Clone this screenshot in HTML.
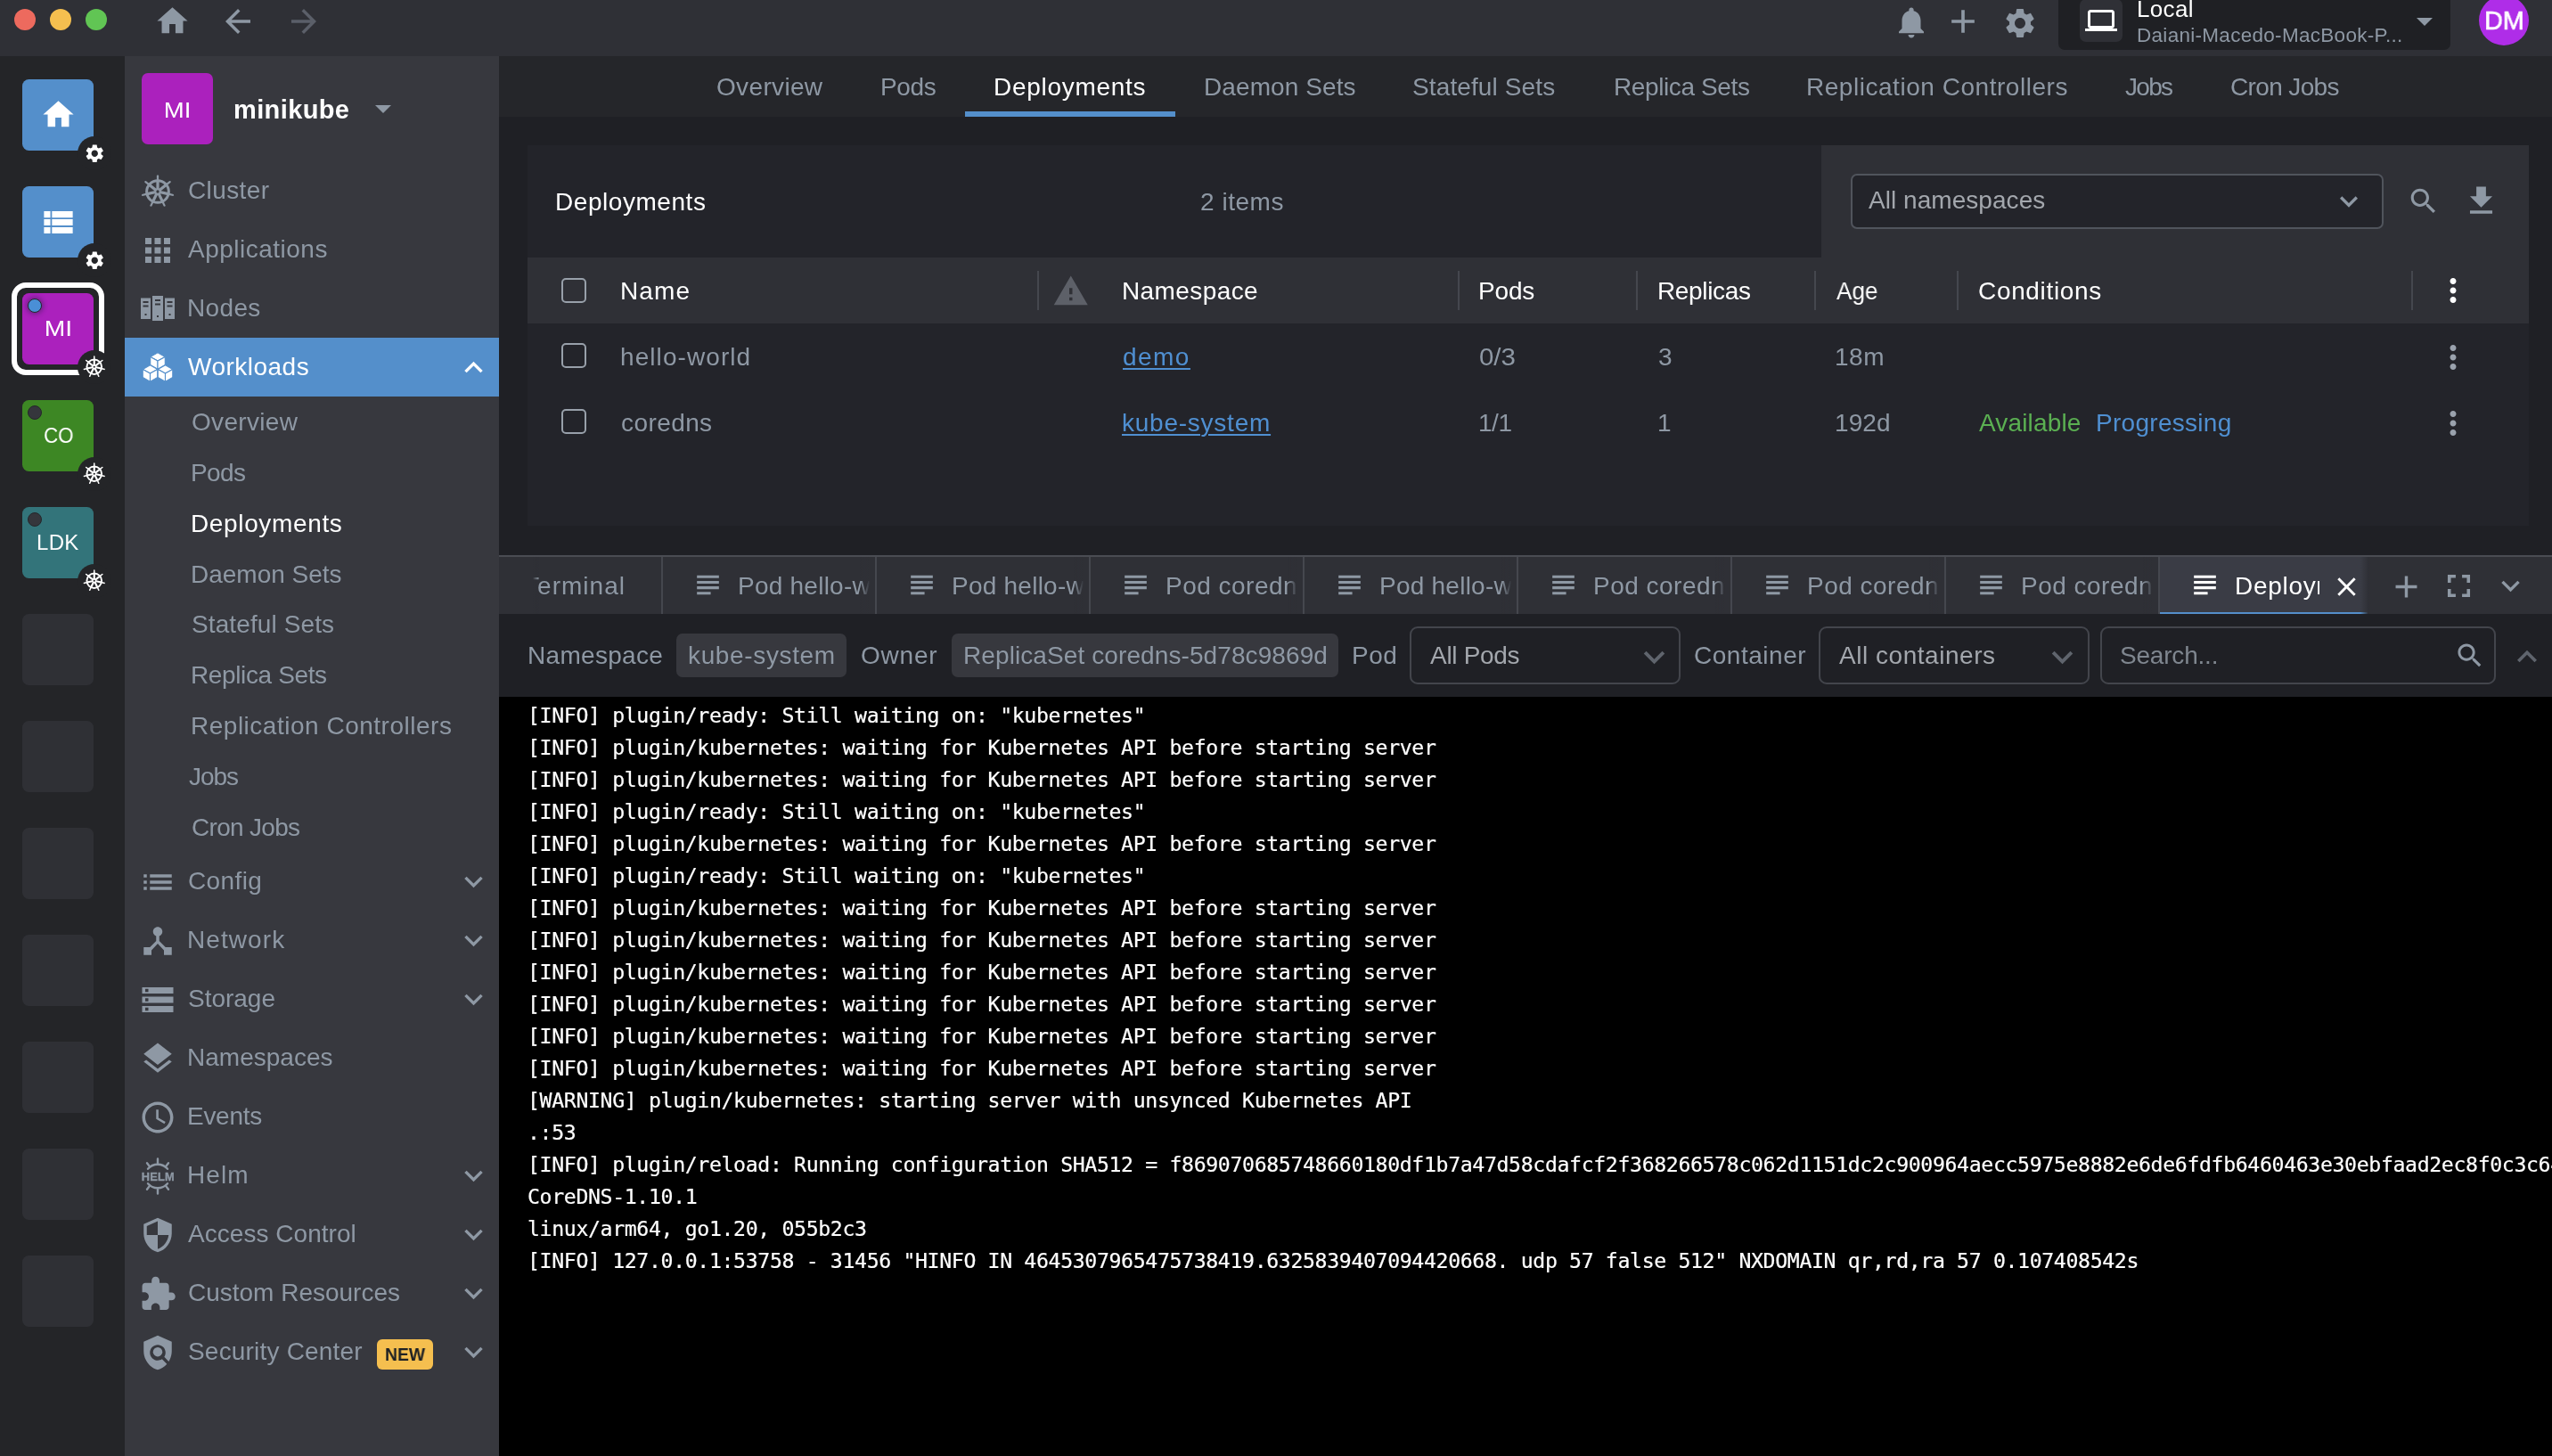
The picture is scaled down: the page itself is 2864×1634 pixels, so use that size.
<!DOCTYPE html>
<html lang="en"><head><meta charset="utf-8"><title>Lens - minikube - Deployments</title>
<style>
html,body{margin:0;padding:0;background:#1f2025;}
body{width:2864px;height:1634px;position:relative;overflow:hidden;font-family:"Liberation Sans", "DejaVu Sans", sans-serif;font-size:28px;color:#8e98a4;}
div,header,aside,nav,main,section,span.box,span.dot,span.t,svg.i{position:absolute;display:block;}
.i{display:block;overflow:visible;}
.dot{border-radius:50%;}
.t{white-space:nowrap;will-change:transform;}
.topbar,.hotbar,.sidebar,.main,.dock,.logs{overflow:hidden;}
.logs pre{will-change:transform;position:absolute;left:31.500px;top:2.500px;margin:0;font-family:"DejaVu Sans Mono", "Liberation Mono", monospace;font-size:23.200px;line-height:36px;color:#fff;white-space:pre;letter-spacing:-.366px;-webkit-text-stroke:.2px #fff;}
</style></head>
<body>
<header class="topbar" style="left:0;top:0;width:2864px;height:63px;background:#2f3036">
<span class="dot" style="left:16px;top:10px;width:24px;height:24px;background:#ed6a5e"></span>
<span class="dot" style="left:56px;top:10px;width:24px;height:24px;background:#f5bf4f"></span>
<span class="dot" style="left:96px;top:10px;width:24px;height:24px;background:#61c554"></span>
<svg class="i" style="left:172.5px;top:3px;width:41px;height:41px" viewBox="0 0 24 24" fill="#8e98a4"><path d="M10 20v-6h4v6h5v-8h3L12 3 2 12h3v8z"/></svg>
<svg class="i" style="left:246px;top:3px;width:42px;height:42px" viewBox="0 0 24 24" fill="#8e98a4"><path d="M20 11H7.83l5.59-5.59L12 4l-8 8 8 8 1.41-1.41L7.83 13H20v-2z"/></svg>
<svg class="i" style="left:320px;top:3px;width:42px;height:42px" viewBox="0 0 24 24" fill="#5b5f69"><path d="M12 4l-1.41 1.41L16.17 11H4v2h12.17l-5.58 5.59L12 20l8-8z"/></svg>
<svg class="i" style="left:2123.5px;top:3.5px;width:42px;height:42px" viewBox="0 0 24 24" fill="#8e98a4"><path d="M12 22c1.1 0 2-.9 2-2h-4c0 1.1.89 2 2 2zm6-6v-5c0-3.07-1.64-5.64-4.5-6.32V4c0-.83-.67-1.5-1.5-1.5s-1.5.67-1.5 1.5v.68C7.63 5.36 6 7.92 6 11v5l-2 2v1h16v-1l-2-2z"/></svg>
<svg class="i" style="left:2181px;top:2px;width:44px;height:44px" viewBox="0 0 24 24" fill="#8e98a4"><path d="M19 13h-6v6h-2v-6H5v-2h6V5h2v6h6v2z"/></svg>
<svg class="i" style="left:2247px;top:5.5px;width:40px;height:40px" viewBox="0 0 24 24" fill="#8e98a4"><path d="M19.14 12.94c.04-.3.06-.61.06-.94 0-.32-.02-.64-.07-.94l2.03-1.58c.18-.14.23-.41.12-.61l-1.92-3.32c-.12-.22-.37-.29-.59-.22l-2.39.96c-.5-.38-1.03-.7-1.62-.94l-.36-2.54c-.04-.24-.24-.41-.48-.41h-3.84c-.24 0-.43.17-.47.41l-.36 2.54c-.59.24-1.13.57-1.62.94l-2.39-.96c-.22-.08-.47 0-.59.22L2.74 8.87c-.12.21-.08.47.12.61l2.03 1.58c-.05.3-.09.63-.09.94s.02.64.07.94l-2.03 1.58c-.18.14-.23.41-.12.61l1.92 3.32c.12.22.37.29.59.22l2.39-.96c.5.38 1.03.7 1.62.94l.36 2.54c.05.24.24.41.48.41h3.84c.24 0 .44-.17.47-.41l.36-2.54c.59-.24 1.13-.56 1.62-.94l2.39.96c.22.08.47 0 .59-.22l1.92-3.32c.12-.22.07-.47-.12-.61l-2.01-1.58zM12 15.6c-1.98 0-3.6-1.62-3.6-3.6s1.62-3.6 3.6-3.6 3.6 1.62 3.6 3.6-1.62 3.6-3.6 3.6z"/></svg>
<div class="box" style="left:2310px;top:-12px;width:440px;height:68px;background:#1f2024;border-radius:7px">
<div class="box" style="left:24px;top:10.600px;width:48px;height:48px;background:#2f3036;border-radius:7px"></div>
<svg class="i" style="left:30px;top:16.8px;width:36px;height:36px" viewBox="0 0 24 24" fill="#fff"><path d="M20 18c1.1 0 1.99-.9 1.99-2L22 6c0-1.1-.9-2-2-2H4c-1.1 0-2 .9-2 2v10c0 1.1.9 2 2 2H0v2h24v-2h-4zM4 6h16v10H4V6z"/></svg>
<span class="t" style="left:88.00px;top:4.9px;font-size:26px;line-height:34px;color:#fff;letter-spacing:0.350px;">Local</span>
<span class="t" style="left:88.00px;top:36.5px;font-size:22.5px;line-height:29px;color:#8e98a4;letter-spacing:0.292px;">Daiani-Macedo-MacBook-P...</span>
<svg class="i" style="left:402px;top:31.600px;width:18px;height:9px" viewBox="0 0 18 9" fill="#8e98a4"><path d="M0 0h18L9 9z"/></svg>
</div>
<div class="dot" style="left:2782px;top:-5.500px;width:56px;height:56px;background:#af2de8"></div>
<span class="t" style="left:2787.50px;top:3.7px;font-size:29.5px;line-height:38px;color:#fff;transform:scaleX(0.9762);transform-origin:2.00px 50%;-webkit-text-stroke:.6px #fff;">DM</span>
</header>
<aside class="hotbar" style="left:0;top:63px;width:140px;height:1571px;background:#242528">
<div class="box" style="left:25px;top:26px;width:80px;height:80px;background:#548fcb;border-radius:7.500px"></div>
<svg class="i" style="left:44.5px;top:44.5px;width:41px;height:41px" viewBox="0 0 24 24" fill="#fff"><path d="M10 20v-6h4v6h5v-8h3L12 3 2 12h3v8z"/></svg>
<span class="dot" style="left:87px;top:90px;width:38px;height:38px;background:#242528"></span><svg class="i" style="left:93.75px;top:96.75px;width:24.5px;height:24.5px" viewBox="0 0 24 24" fill="#fff"><path d="M19.14 12.94c.04-.3.06-.61.06-.94 0-.32-.02-.64-.07-.94l2.03-1.58c.18-.14.23-.41.12-.61l-1.92-3.32c-.12-.22-.37-.29-.59-.22l-2.39.96c-.5-.38-1.03-.7-1.62-.94l-.36-2.54c-.04-.24-.24-.41-.48-.41h-3.84c-.24 0-.43.17-.47.41l-.36 2.54c-.59.24-1.13.57-1.62.94l-2.39-.96c-.22-.08-.47 0-.59.22L2.74 8.87c-.12.21-.08.47.12.61l2.03 1.58c-.05.3-.09.63-.09.94s.02.64.07.94l-2.03 1.58c-.18.14-.23.41-.12.61l1.92 3.32c.12.22.37.29.59.22l2.39-.96c.5.38 1.03.7 1.62.94l.36 2.54c.05.24.24.41.48.41h3.84c.24 0 .44-.17.47-.41l.36-2.54c.59-.24 1.13-.56 1.62-.94l2.39.96c.22.08.47 0 .59-.22l1.92-3.32c.12-.22.07-.47-.12-.61l-2.01-1.58zM12 15.6c-1.98 0-3.6-1.62-3.6-3.6s1.62-3.6 3.6-3.6 3.6 1.62 3.6 3.6-1.62 3.6-3.6 3.6z"/></svg>
<div class="box" style="left:25px;top:146px;width:80px;height:80px;background:#548fcb;border-radius:7.500px"></div>
<svg class="i" style="left:43.5px;top:164.5px;width:43px;height:43px" viewBox="0 0 24 24" fill="#fff"><path d="M3 14h4v-4H3v4zm0 5h4v-4H3v4zM3 9h4V5H3v4zm5 5h13v-4H8v4zm0 5h13v-4H8v4zM8 5v4h13V5H8z"/></svg>
<span class="dot" style="left:87px;top:210px;width:38px;height:38px;background:#242528"></span><svg class="i" style="left:93.75px;top:216.75px;width:24.5px;height:24.5px" viewBox="0 0 24 24" fill="#fff"><path d="M19.14 12.94c.04-.3.06-.61.06-.94 0-.32-.02-.64-.07-.94l2.03-1.58c.18-.14.23-.41.12-.61l-1.92-3.32c-.12-.22-.37-.29-.59-.22l-2.39.96c-.5-.38-1.03-.7-1.62-.94l-.36-2.54c-.04-.24-.24-.41-.48-.41h-3.84c-.24 0-.43.17-.47.41l-.36 2.54c-.59.24-1.13.57-1.62.94l-2.39-.96c-.22-.08-.47 0-.59.22L2.74 8.87c-.12.21-.08.47.12.61l2.03 1.58c-.05.3-.09.63-.09.94s.02.64.07.94l-2.03 1.58c-.18.14-.23.41-.12.61l1.92 3.32c.12.22.37.29.59.22l2.39-.96c.5.38 1.03.7 1.62.94l.36 2.54c.05.24.24.41.48.41h3.84c.24 0 .44-.17.47-.41l.36-2.54c.59-.24 1.13-.56 1.62-.94l2.39.96c.22.08.47 0 .59-.22l1.92-3.32c.12-.22.07-.47-.12-.61l-2.01-1.58zM12 15.6c-1.98 0-3.6-1.62-3.6-3.6s1.62-3.6 3.6-3.6 3.6 1.62 3.6 3.6-1.62 3.6-3.6 3.6z"/></svg>
<div class="box" style="left:13px;top:254px;width:104px;height:104px;border:6.500px solid #fff;border-radius:16px;box-sizing:border-box"></div>
<div class="box" style="left:25px;top:266px;width:80px;height:80px;background:#ab21bd;border-radius:7.500px"></div>
<span class="dot" style="left:30.800px;top:272px;width:16.200px;height:16.200px;background:#4a8fd6;border:1.500px solid #25262a;box-sizing:border-box;box-shadow:0 0 5px 2px rgba(30,30,60,.4);"></span>
<span class="t" style="left:49.90px;top:290.3px;font-size:24px;line-height:31px;color:#fff;transform:scaleX(1.1783);transform-origin:2.00px 50%;">MI</span>
<span class="dot" style="left:87px;top:330px;width:38px;height:38px;background:#242528"></span><svg class="i" style="left:93.25px;top:336.25px;width:25.5px;height:25.5px" viewBox="0 0 24 24" fill="#fff"><circle cx="12" cy="12" r="7.800" fill="none" stroke="#fff" stroke-width="1.900"/><path d="M10.98 12.00L10.98 4.40L11.29 3.60L11.29 0.70L12.00 0.20L12.71 0.70L12.71 3.60L13.02 4.40L13.02 12.00zM11.36 11.20L17.31 6.46L18.13 6.21L20.40 4.40L21.23 4.64L21.27 5.51L19.01 7.31L18.58 8.06L12.64 12.80zM12.23 11.01L19.64 12.70L20.35 13.18L23.17 13.83L23.50 14.63L22.86 15.20L20.03 14.56L19.18 14.69L11.77 12.99zM12.92 11.56L16.22 18.40L16.28 19.26L17.54 21.88L17.12 22.63L16.27 22.49L15.01 19.87L14.38 19.29L11.08 12.44zM12.92 12.44L9.62 19.29L8.99 19.87L7.73 22.49L6.88 22.63L6.46 21.88L7.72 19.26L7.78 18.40L11.08 11.56zM12.23 12.99L4.82 14.69L3.97 14.56L1.14 15.20L0.50 14.63L0.83 13.83L3.65 13.18L4.36 12.70L11.77 11.01zM11.36 12.80L5.42 8.06L4.99 7.31L2.73 5.51L2.77 4.64L3.60 4.40L5.87 6.21L6.69 6.46L12.64 11.20z"/><circle cx="12" cy="12" r="1.050" fill="#242528"/></svg>
<div class="box" style="left:25px;top:386px;width:80px;height:80px;background:#3d8724;border-radius:7.500px"></div>
<span class="dot" style="left:30.800px;top:392px;width:16.200px;height:16.200px;background:#35363c;border:1.500px solid #25262a;box-sizing:border-box;"></span>
<span class="t" style="left:48.65px;top:410.3px;font-size:24px;line-height:31px;color:#fff;transform:scaleX(0.9294);transform-origin:1.00px 50%;">CO</span>
<span class="dot" style="left:87px;top:450px;width:38px;height:38px;background:#242528"></span><svg class="i" style="left:93.25px;top:456.25px;width:25.5px;height:25.5px" viewBox="0 0 24 24" fill="#fff"><circle cx="12" cy="12" r="7.800" fill="none" stroke="#fff" stroke-width="1.900"/><path d="M10.98 12.00L10.98 4.40L11.29 3.60L11.29 0.70L12.00 0.20L12.71 0.70L12.71 3.60L13.02 4.40L13.02 12.00zM11.36 11.20L17.31 6.46L18.13 6.21L20.40 4.40L21.23 4.64L21.27 5.51L19.01 7.31L18.58 8.06L12.64 12.80zM12.23 11.01L19.64 12.70L20.35 13.18L23.17 13.83L23.50 14.63L22.86 15.20L20.03 14.56L19.18 14.69L11.77 12.99zM12.92 11.56L16.22 18.40L16.28 19.26L17.54 21.88L17.12 22.63L16.27 22.49L15.01 19.87L14.38 19.29L11.08 12.44zM12.92 12.44L9.62 19.29L8.99 19.87L7.73 22.49L6.88 22.63L6.46 21.88L7.72 19.26L7.78 18.40L11.08 11.56zM12.23 12.99L4.82 14.69L3.97 14.56L1.14 15.20L0.50 14.63L0.83 13.83L3.65 13.18L4.36 12.70L11.77 11.01zM11.36 12.80L5.42 8.06L4.99 7.31L2.73 5.51L2.77 4.64L3.60 4.40L5.87 6.21L6.69 6.46L12.64 11.20z"/><circle cx="12" cy="12" r="1.050" fill="#242528"/></svg>
<div class="box" style="left:25px;top:506px;width:80px;height:80px;background:#33747a;border-radius:7.500px"></div>
<span class="dot" style="left:30.800px;top:512px;width:16.200px;height:16.200px;background:#35363c;border:1.500px solid #25262a;box-sizing:border-box;"></span>
<span class="t" style="left:41.15px;top:530.3px;font-size:24px;line-height:31px;color:#fff;letter-spacing:0.300px;">LDK</span>
<span class="dot" style="left:87px;top:570px;width:38px;height:38px;background:#242528"></span><svg class="i" style="left:93.25px;top:576.25px;width:25.5px;height:25.5px" viewBox="0 0 24 24" fill="#fff"><circle cx="12" cy="12" r="7.800" fill="none" stroke="#fff" stroke-width="1.900"/><path d="M10.98 12.00L10.98 4.40L11.29 3.60L11.29 0.70L12.00 0.20L12.71 0.70L12.71 3.60L13.02 4.40L13.02 12.00zM11.36 11.20L17.31 6.46L18.13 6.21L20.40 4.40L21.23 4.64L21.27 5.51L19.01 7.31L18.58 8.06L12.64 12.80zM12.23 11.01L19.64 12.70L20.35 13.18L23.17 13.83L23.50 14.63L22.86 15.20L20.03 14.56L19.18 14.69L11.77 12.99zM12.92 11.56L16.22 18.40L16.28 19.26L17.54 21.88L17.12 22.63L16.27 22.49L15.01 19.87L14.38 19.29L11.08 12.44zM12.92 12.44L9.62 19.29L8.99 19.87L7.73 22.49L6.88 22.63L6.46 21.88L7.72 19.26L7.78 18.40L11.08 11.56zM12.23 12.99L4.82 14.69L3.97 14.56L1.14 15.20L0.50 14.63L0.83 13.83L3.65 13.18L4.36 12.70L11.77 11.01zM11.36 12.80L5.42 8.06L4.99 7.31L2.73 5.51L2.77 4.64L3.60 4.40L5.87 6.21L6.69 6.46L12.64 11.20z"/><circle cx="12" cy="12" r="1.050" fill="#242528"/></svg>
<div class="box" style="left:25px;top:626px;width:80px;height:80px;background:#2f3035;border-radius:7.500px"></div>
<div class="box" style="left:25px;top:746px;width:80px;height:80px;background:#2f3035;border-radius:7.500px"></div>
<div class="box" style="left:25px;top:866px;width:80px;height:80px;background:#2f3035;border-radius:7.500px"></div>
<div class="box" style="left:25px;top:986px;width:80px;height:80px;background:#2f3035;border-radius:7.500px"></div>
<div class="box" style="left:25px;top:1106px;width:80px;height:80px;background:#2f3035;border-radius:7.500px"></div>
<div class="box" style="left:25px;top:1226px;width:80px;height:80px;background:#2f3035;border-radius:7.500px"></div>
<div class="box" style="left:25px;top:1346px;width:80px;height:80px;background:#2f3035;border-radius:7.500px"></div>
</aside>
<nav class="sidebar" style="left:140px;top:63px;width:420px;height:1571px;background:#37383e">
<div class="box" style="left:19px;top:19px;width:80px;height:80px;background:#ab21bd;border-radius:7px"></div>
<span class="t" style="left:44.10px;top:44.8px;font-size:24px;line-height:31px;color:#fff;transform:scaleX(1.1478);transform-origin:2.00px 50%;">MI</span>
<span class="t" style="left:122.30px;top:40.8px;font-size:29px;line-height:38px;color:#fff;font-weight:700;letter-spacing:0.386px;">minikube</span>
<svg class="i" style="left:280.5px;top:55px;width:18px;height:9px" viewBox="0 0 18 9" fill="#8e98a4"><path d="M0 0h18L9 9z"/></svg>
<svg class="i" style="left:18px;top:132.8px;width:38px;height:38px" viewBox="0 0 24 24" fill="#8e98a4"><circle cx="12" cy="12" r="7.800" fill="none" stroke="#8e98a4" stroke-width="1.900"/><path d="M10.98 12.00L10.98 4.40L11.29 3.60L11.29 0.70L12.00 0.20L12.71 0.70L12.71 3.60L13.02 4.40L13.02 12.00zM11.36 11.20L17.31 6.46L18.13 6.21L20.40 4.40L21.23 4.64L21.27 5.51L19.01 7.31L18.58 8.06L12.64 12.80zM12.23 11.01L19.64 12.70L20.35 13.18L23.17 13.83L23.50 14.63L22.86 15.20L20.03 14.56L19.18 14.69L11.77 12.99zM12.92 11.56L16.22 18.40L16.28 19.26L17.54 21.88L17.12 22.63L16.27 22.49L15.01 19.87L14.38 19.29L11.08 12.44zM12.92 12.44L9.62 19.29L8.99 19.87L7.73 22.49L6.88 22.63L6.46 21.88L7.72 19.26L7.78 18.40L11.08 11.56zM12.23 12.99L4.82 14.69L3.97 14.56L1.14 15.20L0.50 14.63L0.83 13.83L3.65 13.18L4.36 12.70L11.77 11.01zM11.36 12.80L5.42 8.06L4.99 7.31L2.73 5.51L2.77 4.64L3.60 4.40L5.87 6.21L6.69 6.46L12.64 11.20z"/><circle cx="12" cy="12" r="1.050" fill="#37383e"/></svg><span class="t" style="left:70.50px;top:133px;font-size:28px;line-height:36px;color:#8e98a4;letter-spacing:0.400px;">Cluster</span>
<svg class="i" style="left:16px;top:196.5px;width:42px;height:42px" viewBox="0 0 24 24" fill="#8e98a4"><path d="M4 8h4V4H4v4zm6 12h4v-4h-4v4zm-6 0h4v-4H4v4zm0-6h4v-4H4v4zm6 0h4v-4h-4v4zm6-10v4h4V4h-4zm-6 4h4V4h-4v4zm6 6h4v-4h-4v4zm0 6h4v-4h-4v4z"/></svg><span class="t" style="left:70.70px;top:199px;font-size:28px;line-height:36px;color:#8e98a4;letter-spacing:0.491px;">Applications</span>
<svg class="i" style="left:18px;top:269px;width:38px;height:28px" viewBox="0 0 38 28"><g fill="#8e98a4"><rect x="0" y="2.5" width="11" height="23.5"/><rect x="13" y="0" width="12" height="28"/><rect x="27" y="2.5" width="11" height="23.5"/></g><g fill="#37383e"><rect x="2.5" y="6" width="6" height="2"/><rect x="2.5" y="10.5" width="6" height="2"/><rect x="4.5" y="20" width="2" height="2"/><rect x="16" y="4" width="6" height="2"/><rect x="16" y="8.5" width="6" height="2"/><rect x="18" y="22" width="2" height="2"/><rect x="29.500" y="6" width="6" height="2"/><rect x="29.500" y="10.500" width="6" height="2"/><rect x="31.500" y="20" width="2" height="2"/></g></svg><span class="t" style="left:70.10px;top:265px;font-size:28px;line-height:36px;color:#8e98a4;letter-spacing:0.350px;">Nodes</span>
<div class="box" style="left:0;top:316px;width:420px;height:66px;background:#548fcb"></div><svg class="i" style="left:19px;top:331px;width:36px;height:36px" viewBox="0 0 36 36" fill="#fff" stroke="#548fcb" stroke-width="1.1" stroke-linejoin="round"><polygon points="18,1.8699999999999992 26.3,6.435 18,11 9.7,6.435"/><polygon points="9.7,6.435 18,11 18,20.130000000000003 9.7,15.565000000000001"/><polygon points="26.3,6.435 18,11 18,20.130000000000003 26.3,15.565000000000001"/><polygon points="9.5,15.87 17.8,20.435 9.5,25 1.1999999999999993,20.435"/><polygon points="1.1999999999999993,20.435 9.5,25 9.5,34.13 1.1999999999999993,29.565"/><polygon points="17.8,20.435 9.5,25 9.5,34.13 17.8,29.565"/><polygon points="26.5,15.87 34.8,20.435 26.5,25 18.2,20.435"/><polygon points="18.2,20.435 26.5,25 26.5,34.13 18.2,29.565"/><polygon points="34.8,20.435 26.5,25 26.5,34.13 34.8,29.565"/></svg><span class="t" style="left:70.70px;top:331px;font-size:28px;line-height:36px;color:#fff;letter-spacing:0.488px;">Workloads</span><svg class="i" style="left:370.5px;top:329px;width:41px;height:41px" viewBox="0 0 24 24" fill="#fff"><path d="M7.41 15.41L12 10.83l4.59 4.58L18 14l-6-6-6 6z"/></svg>
<span class="t" style="left:74.50px;top:393.2px;font-size:28px;line-height:36px;color:#8e98a4;letter-spacing:0.329px;">Overview</span>
<span class="t" style="left:74.40px;top:450px;font-size:28px;line-height:36px;color:#8e98a4;letter-spacing:-0.633px;">Pods</span>
<span class="t" style="left:74.40px;top:506.8px;font-size:28px;line-height:36px;color:#fff;letter-spacing:0.640px;">Deployments</span>
<span class="t" style="left:74.40px;top:563.6px;font-size:28px;line-height:36px;color:#8e98a4;letter-spacing:-0.010px;">Daemon Sets</span>
<span class="t" style="left:74.50px;top:620.4px;font-size:28px;line-height:36px;color:#8e98a4;letter-spacing:0.108px;">Stateful Sets</span>
<span class="t" style="left:74.40px;top:677.2px;font-size:28px;line-height:36px;color:#8e98a4;letter-spacing:-0.373px;">Replica Sets</span>
<span class="t" style="left:74.40px;top:734px;font-size:28px;line-height:36px;color:#8e98a4;letter-spacing:0.509px;">Replication Controllers</span>
<span class="t" style="left:71.70px;top:790.8px;font-size:28px;line-height:36px;color:#8e98a4;letter-spacing:-1.033px;">Jobs</span>
<span class="t" style="left:74.50px;top:847.6px;font-size:28px;line-height:36px;color:#8e98a4;letter-spacing:-0.688px;">Cron Jobs</span>
<svg class="i" style="left:16px;top:905.7px;width:42px;height:42px" viewBox="0 0 24 24" fill="#8e98a4"><path d="M3 13h2v-2H3v2zm0 4h2v-2H3v2zm0-8h2V7H3v2zm4 4h14v-2H7v2zm0 4h14v-2H7v2zM7 7v2h14V7H7z"/></svg><span class="t" style="left:70.50px;top:908.4px;font-size:28px;line-height:36px;color:#8e98a4;letter-spacing:0.380px;">Config</span><svg class="i" style="left:370.5px;top:906.4px;width:41px;height:41px" viewBox="0 0 24 24" fill="#8e98a4"><path d="M7.41 8.59L12 13.17l4.59-4.58L18 10l-6 6-6-6 1.41-1.41z"/></svg>
<svg class="i" style="left:16px;top:972.4px;width:42px;height:42px" viewBox="0 0 24 24" fill="#8e98a4"><path d="M17 16l-4-4V8.82C14.16 8.4 15 7.3 15 6c0-1.66-1.34-3-3-3S9 4.34 9 6c0 1.3.84 2.4 2 2.82V12l-4 4H3v5h5v-3.05l4-4.2 4 4.2V21h5v-5h-4z"/></svg><span class="t" style="left:70.10px;top:974.4px;font-size:28px;line-height:36px;color:#8e98a4;letter-spacing:1.083px;">Network</span><svg class="i" style="left:370.5px;top:972.4px;width:41px;height:41px" viewBox="0 0 24 24" fill="#8e98a4"><path d="M7.41 8.59L12 13.17l4.59-4.58L18 10l-6 6-6-6 1.41-1.41z"/></svg>
<svg class="i" style="left:16px;top:1038.4px;width:42px;height:42px" viewBox="0 0 24 24" fill="#8e98a4"><path d="M2 20h20v-4H2v4zm2-3h2v2H4v-2zM2 4v4h20V4H2zm4 3H4V5h2v2zm-4 7h20v-4H2v4zm2-3h2v2H4v-2z"/></svg><span class="t" style="left:70.50px;top:1040.4px;font-size:28px;line-height:36px;color:#8e98a4;letter-spacing:-0.017px;">Storage</span><svg class="i" style="left:370.5px;top:1038.4px;width:41px;height:41px" viewBox="0 0 24 24" fill="#8e98a4"><path d="M7.41 8.59L12 13.17l4.59-4.58L18 10l-6 6-6-6 1.41-1.41z"/></svg>
<svg class="i" style="left:16px;top:1103.9px;width:42px;height:42px" viewBox="0 0 24 24" fill="#8e98a4"><path d="M11.99 18.54l-7.37-5.73L3 14.07l9 7 9-7-1.63-1.27-7.38 5.74zM12 16l7.36-5.73L21 9l-9-7-9 7 1.63 1.27L12 16z"/></svg><span class="t" style="left:70.10px;top:1106.4px;font-size:28px;line-height:36px;color:#8e98a4;letter-spacing:0.011px;">Namespaces</span>
<svg class="i" style="left:16px;top:1169.9px;width:42px;height:42px" viewBox="0 0 24 24" fill="#8e98a4"><path d="M11.99 2C6.47 2 2 6.48 2 12s4.47 10 9.99 10C17.52 22 22 17.52 22 12S17.52 2 11.99 2zM12 20c-4.42 0-8-3.58-8-8s3.58-8 8-8 8 3.58 8 8-3.58 8-8 8zm.5-13H11v6l5.25 3.15.75-1.23-4.5-2.67z"/></svg><span class="t" style="left:70.10px;top:1172.4px;font-size:28px;line-height:36px;color:#8e98a4;letter-spacing:-0.280px;">Events</span>
<svg class="i" style="left:18px;top:1236.4px;width:38px;height:42px;will-change:transform" viewBox="0 0 38 42" fill="none" stroke="#8e98a4" stroke-width="2.400" stroke-linecap="round"><path d="M8 12.800A14.500 14.500 0 0 1 30 12.800"/><path d="M8 29.200A14.500 14.500 0 0 0 30 29.200"/><path d="M19 7.300V1.400M10.300 10.600L7 6.200M27.700 10.600l3.300-4.400M19 34.700V40.600M10.300 31.400l-3.300 4.400M27.700 31.400l3.300 4.400"/><text x="19.300" y="25.800" text-anchor="middle" style="font-family:'Liberation Sans',sans-serif;font-weight:700;font-size:12.800px;letter-spacing:.2px" fill="#8e98a4" stroke="#8e98a4" stroke-width=".35">HELM</text></svg><span class="t" style="left:70.10px;top:1238.4px;font-size:28px;line-height:36px;color:#8e98a4;letter-spacing:1.067px;">Helm</span><svg class="i" style="left:370.5px;top:1236.4px;width:41px;height:41px" viewBox="0 0 24 24" fill="#8e98a4"><path d="M7.41 8.59L12 13.17l4.59-4.58L18 10l-6 6-6-6 1.41-1.41z"/></svg>
<svg class="i" style="left:16px;top:1301.9px;width:42px;height:42px" viewBox="0 0 24 24" fill="#8e98a4"><path d="M12 1L3 5v6c0 5.55 3.84 10.74 9 12 5.16-1.26 9-6.45 9-12V5l-9-4zm0 10.99h7c-.53 4.12-3.28 7.79-7 8.940V12H5V6.3l7-3.11v8.8z"/></svg><span class="t" style="left:70.70px;top:1304.4px;font-size:28px;line-height:36px;color:#8e98a4;letter-spacing:0.038px;">Access Control</span><svg class="i" style="left:370.5px;top:1302.4px;width:41px;height:41px" viewBox="0 0 24 24" fill="#8e98a4"><path d="M7.41 8.59L12 13.17l4.59-4.58L18 10l-6 6-6-6 1.41-1.41z"/></svg>
<svg class="i" style="left:15.75px;top:1367.65px;width:42.5px;height:42.5px" viewBox="0 0 24 24" fill="#8e98a4"><path d="M20.5 11H19V7c0-1.1-.9-2-2-2h-4V3.5C13 2.12 11.88 1 10.5 1S8 2.12 8 3.5V5H4c-1.1 0-1.99.9-1.99 2v3.8H3.500c1.490 0 2.700 1.210 2.700 2.700s-1.210 2.700-2.700 2.700H2V20c0 1.100.900 2 2 2h3.800v-1.500c0-1.490 1.210-2.700 2.700-2.700 1.490 0 2.700 1.210 2.700 2.700V22H17c1.100 0 2-.900 2-2v-4h1.500c1.380 0 2.500-1.120 2.500-2.500S21.880 11 20.500 11z"/></svg><span class="t" style="left:70.50px;top:1370.4px;font-size:28px;line-height:36px;color:#8e98a4;letter-spacing:-0.007px;">Custom Resources</span><svg class="i" style="left:370.5px;top:1368.4px;width:41px;height:41px" viewBox="0 0 24 24" fill="#8e98a4"><path d="M7.41 8.59L12 13.17l4.59-4.58L18 10l-6 6-6-6 1.41-1.41z"/></svg>
<svg class="i" style="left:16px;top:1433.9px;width:42px;height:42px" viewBox="0 0 24 24" fill="#8e98a4"><circle cx="12" cy="11.500" r="3"/><path d="M21 5l-9-4-9 4v6c0 5.55 3.84 10.74 9 12 2.3-.56 4.33-1.9 5.88-3.71l-3.12-3.12c-1.940 1.290-4.580 1.070-6.290-.640-1.950-1.950-1.950-5.120 0-7.070 1.950-1.950 5.120-1.950 7.070 0 1.710 1.710 1.920 4.350.640 6.290l2.900 2.900C20.290 15.690 21 13.380 21 11V5z"/></svg><span class="t" style="left:70.50px;top:1436.4px;font-size:28px;line-height:36px;color:#8e98a4;letter-spacing:0.193px;">Security Center</span><svg class="i" style="left:370.5px;top:1434.4px;width:41px;height:41px" viewBox="0 0 24 24" fill="#8e98a4"><path d="M7.41 8.59L12 13.17l4.59-4.58L18 10l-6 6-6-6 1.41-1.41z"/></svg>
<div class="box" style="left:283px;top:1440px;width:63px;height:34px;background:#f5bf4f;border-radius:6px"></div>
<span class="t" style="left:292.00px;top:1444px;font-size:20px;line-height:26px;color:#1e2124;font-weight:700;transform:scaleX(0.9652);transform-origin:1.00px 50%;">NEW</span>
</nav>
<main class="main" style="left:560px;top:63px;width:2304px;height:560px;background:#1f2025">
<div class="box" style="left:0;top:0;width:2304px;height:68px;background:#25262a"></div>
<span class="t" style="left:243.90px;top:17px;font-size:28px;line-height:36px;color:#8e98a4;letter-spacing:0.343px;">Overview</span>
<span class="t" style="left:427.70px;top:17px;font-size:28px;line-height:36px;color:#8e98a4;letter-spacing:-0.367px;">Pods</span>
<span class="t" style="left:554.70px;top:17px;font-size:28px;line-height:36px;color:#fff;letter-spacing:0.720px;">Deployments</span>
<span class="t" style="left:790.50px;top:17px;font-size:28px;line-height:36px;color:#8e98a4;letter-spacing:0.090px;">Daemon Sets</span>
<span class="t" style="left:1024.50px;top:17px;font-size:28px;line-height:36px;color:#8e98a4;letter-spacing:0.117px;">Stateful Sets</span>
<span class="t" style="left:1250.50px;top:17px;font-size:28px;line-height:36px;color:#8e98a4;letter-spacing:-0.391px;">Replica Sets</span>
<span class="t" style="left:1466.60px;top:17px;font-size:28px;line-height:36px;color:#8e98a4;letter-spacing:0.532px;">Replication Controllers</span>
<span class="t" style="left:1825.00px;top:17px;font-size:28px;line-height:36px;color:#8e98a4;letter-spacing:-1.700px;">Jobs</span>
<span class="t" style="left:1943.20px;top:17px;font-size:28px;line-height:36px;color:#8e98a4;letter-spacing:-0.637px;">Cron Jobs</span>
<div class="box" style="left:523px;top:61.5px;width:236px;height:6.500px;background:#548fcb"></div>
<div class="box" style="left:32px;top:100px;width:2246px;height:427px;background:#23242a"></div>
<div class="box" style="left:1484px;top:100px;width:794px;height:126px;background:#2f3036"></div>
<span class="t" style="left:62.80px;top:146px;font-size:28px;line-height:36px;color:#fff;letter-spacing:0.550px;">Deployments</span>
<span class="t" style="left:787.20px;top:146px;font-size:28px;line-height:36px;color:#8e98a4;letter-spacing:0.533px;">2 items</span>
<div class="box" style="left:1517px;top:132px;width:598px;height:62px;background:#23242a;border:2px solid #50545c;border-radius:7px;box-sizing:border-box"></div>
<span class="t" style="left:1537.00px;top:144px;font-size:28px;line-height:36px;color:#a3a7ad;letter-spacing:0.046px;">All namespaces</span>
<svg class="i" style="left:2056.4px;top:143px;width:40px;height:40px" viewBox="0 0 24 24" fill="#8e98a4"><path d="M7.41 8.59L12 13.17l4.59-4.58L18 10l-6 6-6-6 1.41-1.41z"/></svg>
<svg class="i" style="left:2140.95px;top:144.25px;width:37.5px;height:37.5px" viewBox="0 0 24 24" fill="#8e98a4"><path d="M15.5 14h-.79l-.28-.27C15.41 12.59 16 11.11 16 9.5 16 5.91 13.09 3 9.5 3S3 5.91 3 9.5 5.91 16 9.5 16c1.61 0 3.09-.59 4.23-1.57l.27.28v.79l5 4.99L20.49 19l-4.99-5zm-6 0C7.01 14 5 11.99 5 9.5S7.01 5 9.5 5 14 7.01 14 9.5 11.99 14 9.5 14z"/></svg>
<svg class="i" style="left:2203px;top:141px;width:43px;height:43px" viewBox="0 0 24 24" fill="#8e98a4"><path d="M19 9h-4V3H9v6H5l7 7 7-7zM5 18v2h14v-2H5z"/></svg>
<div class="box" style="left:32px;top:226px;width:2246px;height:74px;background:#2f3036"></div>
<span class="box" style="left:70px;top:249px;width:28px;height:28px;border:2px solid #98a0aa;border-radius:5px;box-sizing:border-box"></span>
<span class="t" style="left:135.60px;top:246px;font-size:28px;line-height:36px;color:#fff;letter-spacing:1.133px;">Name</span>
<span class="t" style="left:698.50px;top:246px;font-size:28px;line-height:36px;color:#fff;letter-spacing:0.400px;">Namespace</span>
<span class="t" style="left:1099.20px;top:246px;font-size:28px;line-height:36px;color:#fff;letter-spacing:-0.167px;">Pods</span>
<span class="t" style="left:1299.50px;top:246px;font-size:28px;line-height:36px;color:#fff;letter-spacing:-0.357px;">Replicas</span>
<span class="t" style="left:1500.60px;top:246px;font-size:28px;line-height:36px;color:#fff;transform:scaleX(0.9306);transform-origin:0.00px 50%;">Age</span>
<span class="t" style="left:1660.20px;top:246px;font-size:28px;line-height:36px;color:#fff;letter-spacing:0.667px;">Conditions</span>
<span class="box" style="left:604px;top:241px;width:2px;height:44px;background:#45474e"></span>
<span class="box" style="left:1076px;top:241px;width:2px;height:44px;background:#45474e"></span>
<span class="box" style="left:1276px;top:241px;width:2px;height:44px;background:#45474e"></span>
<span class="box" style="left:1476px;top:241px;width:2px;height:44px;background:#45474e"></span>
<span class="box" style="left:1636px;top:241px;width:2px;height:44px;background:#45474e"></span>
<span class="box" style="left:2146px;top:241px;width:2px;height:44px;background:#45474e"></span>
<svg class="i" style="left:620.55px;top:242.95px;width:41.5px;height:41.5px" viewBox="0 0 24 24" fill="#5d6068"><path d="M1 21h22L12 2 1 21zm12-3h-2v-2h2v2zm0-4h-2v-4h2v4z"/></svg>
<svg class="i" style="left:2171.5px;top:242px;width:42px;height:42px" viewBox="0 0 24 24" fill="#fff"><path d="M12 8c1.1 0 2-.9 2-2s-.9-2-2-2-2 .9-2 2 .9 2 2 2zm0 2c-1.1 0-2 .9-2 2s.9 2 2 2 2-.9 2-2-.9-2-2-2zm0 6c-1.1 0-2 .9-2 2s.9 2 2 2 2-.9 2-2-.9-2-2-2z"/></svg>
<span class="box" style="left:70px;top:322.3px;width:28px;height:28px;border:2px solid #98a0aa;border-radius:5px;box-sizing:border-box"></span>
<span class="t" style="left:135.60px;top:319.5px;font-size:28px;line-height:36px;color:#8e98a4;letter-spacing:1.080px;">hello-world</span>
<span class="t" style="left:699.50px;top:319.5px;font-size:28px;line-height:36px;color:#4f8fd1;letter-spacing:1.467px;text-decoration:underline;text-decoration-thickness:1.5px;text-underline-offset:2.5px;">demo</span>
<span class="t" style="left:1100.20px;top:319.5px;font-size:28px;line-height:36px;color:#8e98a4;transform:scaleX(1.0514);transform-origin:1.00px 50%;">0/3</span>
<span class="t" style="left:1300.50px;top:319.5px;font-size:28px;line-height:36px;color:#8e98a4;">3</span>
<span class="t" style="left:1499.20px;top:319.5px;font-size:28px;line-height:36px;color:#8e98a4;letter-spacing:0.500px;">18m</span>
<svg class="i" style="left:2171.5px;top:317px;width:42px;height:42px" viewBox="0 0 24 24" fill="#9aa2ad"><path d="M12 8c1.1 0 2-.9 2-2s-.9-2-2-2-2 .9-2 2 .9 2 2 2zm0 2c-1.1 0-2 .9-2 2s.9 2 2 2 2-.9 2-2-.9-2-2-2zm0 6c-1.1 0-2 .9-2 2s.9 2 2 2 2-.9 2-2-.9-2-2-2z"/></svg>
<span class="box" style="left:70px;top:396.3px;width:28px;height:28px;border:2px solid #98a0aa;border-radius:5px;box-sizing:border-box"></span>
<span class="t" style="left:136.60px;top:393.5px;font-size:28px;line-height:36px;color:#8e98a4;letter-spacing:0.417px;">coredns</span>
<span class="t" style="left:698.50px;top:393.5px;font-size:28px;line-height:36px;color:#4f8fd1;letter-spacing:0.760px;text-decoration:underline;text-decoration-thickness:1.5px;text-underline-offset:2.5px;">kube-system</span>
<span class="t" style="left:1099.20px;top:393.5px;font-size:28px;line-height:36px;color:#8e98a4;letter-spacing:-0.450px;">1/1</span>
<span class="t" style="left:1299.50px;top:393.5px;font-size:28px;line-height:36px;color:#8e98a4;">1</span>
<span class="t" style="left:1499.20px;top:393.5px;font-size:28px;line-height:36px;color:#8e98a4;letter-spacing:0.067px;">192d</span>
<span class="t" style="left:1661.20px;top:393.5px;font-size:28px;line-height:36px;color:#5bb052;letter-spacing:0.163px;">Available</span>
<span class="t" style="left:1792.30px;top:393.5px;font-size:28px;line-height:36px;color:#4f8fd1;letter-spacing:0.290px;">Progressing</span>
<svg class="i" style="left:2171.5px;top:391px;width:42px;height:42px" viewBox="0 0 24 24" fill="#9aa2ad"><path d="M12 8c1.1 0 2-.9 2-2s-.9-2-2-2-2 .9-2 2 .9 2 2 2zm0 2c-1.1 0-2 .9-2 2s.9 2 2 2 2-.9 2-2-.9-2-2-2zm0 6c-1.1 0-2 .9-2 2s.9 2 2 2 2-.9 2-2-.9-2-2-2z"/></svg>
</main>
<section class="dock" style="left:560px;top:623px;width:2304px;height:1011px;background:#1f2025">
<div class="box" style="left:0;top:0;width:2304px;height:66px;background:#2f3036;border-top:2px solid #4a4c53;box-sizing:border-box"></div>
<div class="box tabsclip" style="left:0;top:2px;width:2098px;height:64px;overflow:hidden">
<span class="t" style="left:27.70px;top:14.5px;font-size:28px;line-height:36px;color:#8e98a4;letter-spacing:1.029px;">Terminal</span>
<span class="box" style="left:181.7px;top:0;width:2px;height:64px;background:#45474e"></span>
<svg class="i" style="left:215.6px;top:12.7px;width:37px;height:37px" viewBox="0 0 24 24" fill="#8e98a4"><path d="M14 17H4v2h10v-2zm6-8H4v2h16V9zM4 15h16v-2H4v2zM4 5v2h16V5H4z"/></svg>
<span class="t" style="left:268.00px;top:14.5px;font-size:28px;line-height:36px;color:#8e98a4;letter-spacing:0.240px;">Pod hello-w</span>
<span class="box" style="left:404.7px;top:0;width:17px;height:64px;background:linear-gradient(90deg,rgba(47,48,54,0),#2f3036 11px)"></span>
<span class="box" style="left:421.7px;top:0;width:2px;height:64px;background:#45474e"></span>
<svg class="i" style="left:455.6px;top:12.7px;width:37px;height:37px" viewBox="0 0 24 24" fill="#8e98a4"><path d="M14 17H4v2h10v-2zm6-8H4v2h16V9zM4 15h16v-2H4v2zM4 5v2h16V5H4z"/></svg>
<span class="t" style="left:508.00px;top:14.5px;font-size:28px;line-height:36px;color:#8e98a4;letter-spacing:0.240px;">Pod hello-w</span>
<span class="box" style="left:644.7px;top:0;width:17px;height:64px;background:linear-gradient(90deg,rgba(47,48,54,0),#2f3036 11px)"></span>
<span class="box" style="left:661.7px;top:0;width:2px;height:64px;background:#45474e"></span>
<svg class="i" style="left:695.6px;top:12.7px;width:37px;height:37px" viewBox="0 0 24 24" fill="#8e98a4"><path d="M14 17H4v2h10v-2zm6-8H4v2h16V9zM4 15h16v-2H4v2zM4 5v2h16V5H4z"/></svg>
<span class="t" style="left:748.00px;top:14.5px;font-size:28px;line-height:36px;color:#8e98a4;letter-spacing:0.489px;">Pod coredn</span>
<span class="box" style="left:884.7px;top:0;width:17px;height:64px;background:linear-gradient(90deg,rgba(47,48,54,0),#2f3036 11px)"></span>
<span class="box" style="left:901.7px;top:0;width:2px;height:64px;background:#45474e"></span>
<svg class="i" style="left:935.6px;top:12.7px;width:37px;height:37px" viewBox="0 0 24 24" fill="#8e98a4"><path d="M14 17H4v2h10v-2zm6-8H4v2h16V9zM4 15h16v-2H4v2zM4 5v2h16V5H4z"/></svg>
<span class="t" style="left:988.00px;top:14.5px;font-size:28px;line-height:36px;color:#8e98a4;letter-spacing:0.240px;">Pod hello-w</span>
<span class="box" style="left:1124.7px;top:0;width:17px;height:64px;background:linear-gradient(90deg,rgba(47,48,54,0),#2f3036 11px)"></span>
<span class="box" style="left:1141.7px;top:0;width:2px;height:64px;background:#45474e"></span>
<svg class="i" style="left:1175.6px;top:12.7px;width:37px;height:37px" viewBox="0 0 24 24" fill="#8e98a4"><path d="M14 17H4v2h10v-2zm6-8H4v2h16V9zM4 15h16v-2H4v2zM4 5v2h16V5H4z"/></svg>
<span class="t" style="left:1228.00px;top:14.5px;font-size:28px;line-height:36px;color:#8e98a4;letter-spacing:0.489px;">Pod coredn</span>
<span class="box" style="left:1364.7px;top:0;width:17px;height:64px;background:linear-gradient(90deg,rgba(47,48,54,0),#2f3036 11px)"></span>
<span class="box" style="left:1381.7px;top:0;width:2px;height:64px;background:#45474e"></span>
<svg class="i" style="left:1415.6px;top:12.7px;width:37px;height:37px" viewBox="0 0 24 24" fill="#8e98a4"><path d="M14 17H4v2h10v-2zm6-8H4v2h16V9zM4 15h16v-2H4v2zM4 5v2h16V5H4z"/></svg>
<span class="t" style="left:1468.00px;top:14.5px;font-size:28px;line-height:36px;color:#8e98a4;letter-spacing:0.489px;">Pod coredn</span>
<span class="box" style="left:1604.7px;top:0;width:17px;height:64px;background:linear-gradient(90deg,rgba(47,48,54,0),#2f3036 11px)"></span>
<span class="box" style="left:1621.7px;top:0;width:2px;height:64px;background:#45474e"></span>
<svg class="i" style="left:1655.6px;top:12.7px;width:37px;height:37px" viewBox="0 0 24 24" fill="#8e98a4"><path d="M14 17H4v2h10v-2zm6-8H4v2h16V9zM4 15h16v-2H4v2zM4 5v2h16V5H4z"/></svg>
<span class="t" style="left:1708.00px;top:14.5px;font-size:28px;line-height:36px;color:#8e98a4;letter-spacing:0.489px;">Pod coredn</span>
<span class="box" style="left:1844.7px;top:0;width:17px;height:64px;background:linear-gradient(90deg,rgba(47,48,54,0),#2f3036 11px)"></span>
<div class="box" style="left:1863.2px;top:0;width:234px;height:64px;background:#3a3c45;border-bottom:2.500px solid #548fcb;box-sizing:border-box"></div>
<span class="box" style="left:1861.7px;top:0;width:2px;height:64px;background:#45474e"></span>
<svg class="i" style="left:1895.6px;top:12.7px;width:37px;height:37px" viewBox="0 0 24 24" fill="#fff"><path d="M14 17H4v2h10v-2zm6-8H4v2h16V9zM4 15h16v-2H4v2zM4 5v2h16V5H4z"/></svg>
<span class="t clipt" style="left:1947.7px;top:15px;width:94.800px;height:35px;overflow:hidden"><span style="position:absolute;left:0;top:0;font-size:28px;line-height:35px;color:#fff;letter-spacing:.7px">Deployments</span></span>
<span class="box" style="left:0;top:0;width:45px;height:64px;background:linear-gradient(90deg,#2f3036 38px,rgba(47,48,54,0))"></span>
</div>
<svg class="i" style="left:2055.5px;top:17.5px;width:35px;height:35px" viewBox="0 0 24 24" fill="#fff"><path d="M19 6.41L17.59 5 12 10.59 6.41 5 5 6.41 10.59 12 5 17.59 6.41 19 12 13.410 17.590 19 19 17.590 13.410 12z"/></svg>
<span class="box" style="left:2088.5px;top:2px;width:9.500px;height:64px;background:linear-gradient(90deg,rgba(47,48,54,0),#2f3036)"></span>
<svg class="i" style="left:2120.2px;top:14.7px;width:41px;height:41px" viewBox="0 0 24 24" fill="#8e98a4"><path d="M19 13h-6v6h-2v-6H5v-2h6V5h2v6h6v2z"/></svg>
<svg class="i" style="left:2177.5px;top:13px;width:43px;height:43px" viewBox="0 0 24 24" fill="#8e98a4"><path d="M7 14H5v5h5v-2H7v-3zm-2-4h2V7h3V5H5v5zm12 7h-3v2h5v-5h-2v3zM14 5v2h3v3h2V5h-5z"/></svg>
<svg class="i" style="left:2237px;top:14px;width:41px;height:41px" viewBox="0 0 24 24" fill="#8e98a4"><path d="M7.41 8.59L12 13.17l4.59-4.58L18 10l-6 6-6-6 1.41-1.41z"/></svg>
<span class="t" style="left:32.30px;top:95.3px;font-size:28px;line-height:36px;color:#8e98a4;letter-spacing:0.300px;">Namespace</span>
<div class="box" style="left:199px;top:88px;width:191px;height:49px;background:#37383e;border-radius:7px"></div>
<span class="t" style="left:211.80px;top:95.3px;font-size:28px;line-height:36px;color:#8e98a4;letter-spacing:0.640px;">kube-system</span>
<span class="t" style="left:405.70px;top:95.3px;font-size:28px;line-height:36px;color:#8e98a4;letter-spacing:0.800px;">Owner</span>
<div class="box" style="left:507.8px;top:88px;width:434px;height:49px;background:#37383e;border-radius:7px"></div>
<span class="t" style="left:520.50px;top:95.3px;font-size:28px;line-height:36px;color:#8e98a4;letter-spacing:0.093px;">ReplicaSet coredns-5d78c9869d</span>
<span class="t" style="left:957.00px;top:95.3px;font-size:28px;line-height:36px;color:#8e98a4;letter-spacing:0.500px;">Pod</span>
<div class="box" style="left:1022.1px;top:80.3px;width:303.7px;height:64.400px;border:2px solid #43454c;border-radius:9px;box-sizing:border-box"></div>
<span class="t" style="left:1044.60px;top:95.3px;font-size:28px;line-height:36px;color:#a3a7ad;letter-spacing:-0.300px;">All Pods</span>
<svg class="i" style="left:1272.5px;top:90.8px;width:47px;height:47px" viewBox="0 0 24 24" fill="#5f646d"><path d="M7.41 8.59L12 13.17l4.59-4.58L18 10l-6 6-6-6 1.41-1.41z"/></svg>
<span class="t" style="left:1340.50px;top:95.3px;font-size:28px;line-height:36px;color:#8e98a4;letter-spacing:0.525px;">Container</span>
<div class="box" style="left:1480.8px;top:80.3px;width:303.8px;height:64.400px;border:2px solid #43454c;border-radius:9px;box-sizing:border-box"></div>
<span class="t" style="left:1504.10px;top:95.3px;font-size:28px;line-height:36px;color:#a3a7ad;letter-spacing:0.531px;">All containers</span>
<svg class="i" style="left:1731.3px;top:90.8px;width:47px;height:47px" viewBox="0 0 24 24" fill="#5f646d"><path d="M7.41 8.59L12 13.17l4.59-4.58L18 10l-6 6-6-6 1.41-1.41z"/></svg>
<div class="box" style="left:1797.1px;top:80.3px;width:443.5px;height:64.400px;border:2px solid #43454c;border-radius:9px;box-sizing:border-box"></div>
<span class="t" style="left:1819.30px;top:95.3px;font-size:28px;line-height:36px;color:#7f868f;letter-spacing:-0.200px;">Search...</span>
<svg class="i" style="left:2193.55px;top:95.25px;width:35.5px;height:35.5px" viewBox="0 0 24 24" fill="#8e98a4"><path d="M15.5 14h-.79l-.28-.27C15.41 12.59 16 11.11 16 9.5 16 5.91 13.09 3 9.5 3S3 5.91 3 9.5 5.91 16 9.5 16c1.61 0 3.09-.59 4.23-1.57l.27.28v.79l5 4.99L20.49 19l-4.99-5zm-6 0C7.01 14 5 11.99 5 9.5S7.01 5 9.5 5 14 7.01 14 9.5 11.99 14 9.5 14z"/></svg>
<svg class="i" style="left:2254.2px;top:91.8px;width:44px;height:44px" viewBox="0 0 24 24" fill="#5f646d"><path d="M7.41 15.41L12 10.83l4.59 4.58L18 14l-6-6-6 6z"/></svg>
<div class="logs" style="left:0;top:159px;width:2304px;height:852px;background:#000">
<pre>[INFO] plugin/ready: Still waiting on: &quot;kubernetes&quot;
[INFO] plugin/kubernetes: waiting for Kubernetes API before starting server
[INFO] plugin/kubernetes: waiting for Kubernetes API before starting server
[INFO] plugin/ready: Still waiting on: &quot;kubernetes&quot;
[INFO] plugin/kubernetes: waiting for Kubernetes API before starting server
[INFO] plugin/ready: Still waiting on: &quot;kubernetes&quot;
[INFO] plugin/kubernetes: waiting for Kubernetes API before starting server
[INFO] plugin/kubernetes: waiting for Kubernetes API before starting server
[INFO] plugin/kubernetes: waiting for Kubernetes API before starting server
[INFO] plugin/kubernetes: waiting for Kubernetes API before starting server
[INFO] plugin/kubernetes: waiting for Kubernetes API before starting server
[INFO] plugin/kubernetes: waiting for Kubernetes API before starting server
[WARNING] plugin/kubernetes: starting server with unsynced Kubernetes API
.:53
[INFO] plugin/reload: Running configuration SHA512 = f869070685748660180df1b7a47d58cdafcf2f368266578c062d1151dc2c900964aecc5975e8882e6de6fdfb6460463e30ebfaad2ec8f0c3c64a3b
CoreDNS-1.10.1
linux/arm64, go1.20, 055b2c3
[INFO] 127.0.0.1:53758 - 31456 &quot;HINFO IN 4645307965475738419.6325839407094420668. udp 57 false 512&quot; NXDOMAIN qr,rd,ra 57 0.107408542s</pre>
</div>
</section>
</body></html>
